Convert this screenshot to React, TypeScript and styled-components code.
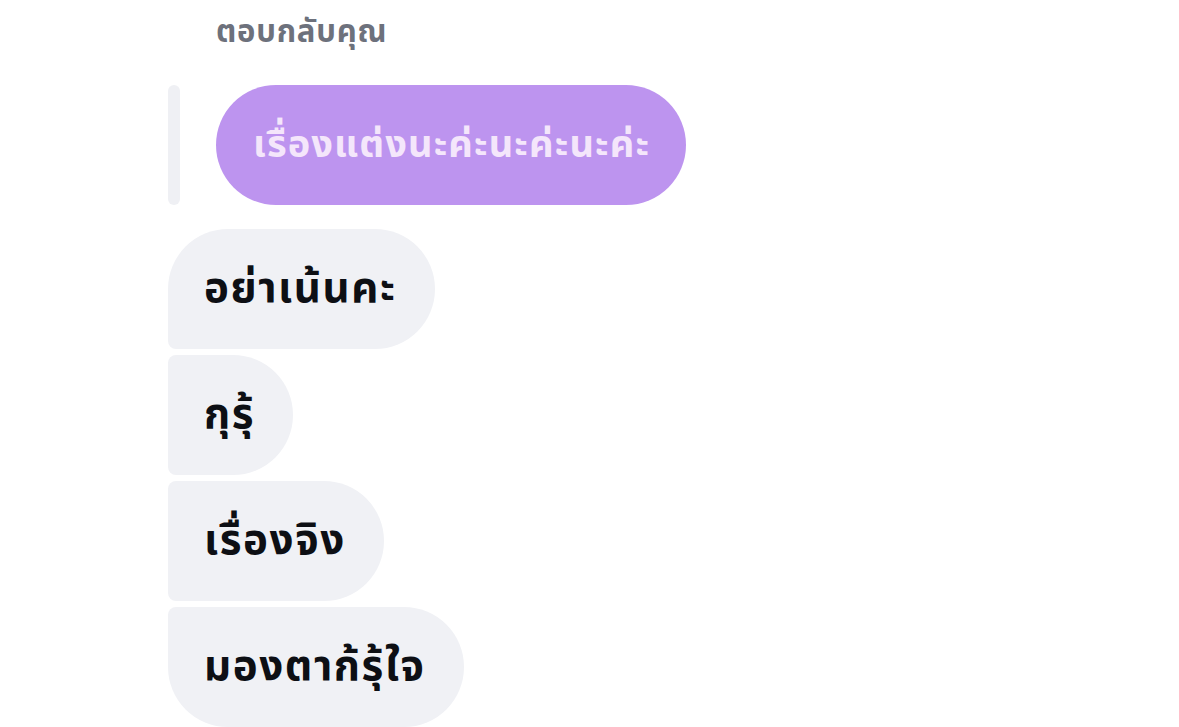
import React, { FC } from 'react';
import styled, { createGlobalStyle } from 'styled-components';

const GlobalStyle = createGlobalStyle`
  html, body {
    margin: 0;
    padding: 0;
    background: #ffffff;
  }
  body {
    font-family: "Noto Sans Thai", "Noto Sans", "DejaVu Sans", sans-serif;
  }
`;

type Corner = 'first' | 'middle' | 'last';

interface BubbleProps {
  $pos: Corner;
}

const messages: { text: string; pos: Corner }[] = [
  { text: 'อย่าเน้นคะ', pos: 'first' },
  { text: 'กุรุ้', pos: 'middle' },
  { text: 'เรื่องจิง', pos: 'middle' },
  { text: 'มองตาก้รุ้ใจ', pos: 'last' },
];

const App: FC = () => {
  return (
    <>
      <GlobalStyle />
      <Thread>
        <ReplyLabel>ตอบกลับคุณ</ReplyLabel>
        <QuoteRow>
          <QuoteBar />
          <QuoteBubble>เรื่องแต่งนะค่ะนะค่ะนะค่ะ</QuoteBubble>
        </QuoteRow>
        <Group>
          {messages.map((m) => (
            <Bubble key={m.text} $pos={m.pos}>
              {m.text}
            </Bubble>
          ))}
        </Group>
      </Thread>
    </>
  );
};

const Thread = styled.div`
  width: 1179px;
  height: 727px;
  overflow: hidden;
  box-sizing: border-box;
  padding: 12px 0 0 168px;
  display: flex;
  flex-direction: column;
`;

const ReplyLabel = styled.div`
  margin-left: 48px;
  font-size: 31px;
  font-weight: 700;
  line-height: 42px;
  letter-spacing: 0.8px;
  color: #6d717c;
`;

const QuoteRow = styled.div`
  margin-top: 31px;
  display: flex;
  flex-direction: row;
  gap: 36px;
  align-items: stretch;
`;

const QuoteBar = styled.div`
  width: 12px;
  border-radius: 6px;
  background: #eff0f4;
`;

const QuoteBubble = styled.div`
  height: 120px;
  box-sizing: border-box;
  padding: 0 36px 0 37px;
  display: flex;
  align-items: center;
  border-radius: 60px;
  background: #bd94ef;
  color: #f4e6fb;
  font-size: 38px;
  font-weight: 700;
  letter-spacing: 1.1px;
`;

const Group = styled.div`
  margin-top: 24px;
  display: flex;
  flex-direction: column;
  align-items: flex-start;
  gap: 6px;
`;

const Bubble = styled.div<BubbleProps>`
  height: 120px;
  box-sizing: border-box;
  padding: 0 38px 0 36px;
  display: flex;
  align-items: center;
  background: #f0f1f5;
  color: #0d0f14;
  font-size: 42px;
  font-weight: 700;
  letter-spacing: 1.6px;
  border-radius: ${({ $pos }) =>
    $pos === 'first'
      ? '60px 60px 60px 8px'
      : $pos === 'last'
      ? '8px 60px 60px 60px'
      : '8px 60px 60px 8px'};
`;

export default App;
